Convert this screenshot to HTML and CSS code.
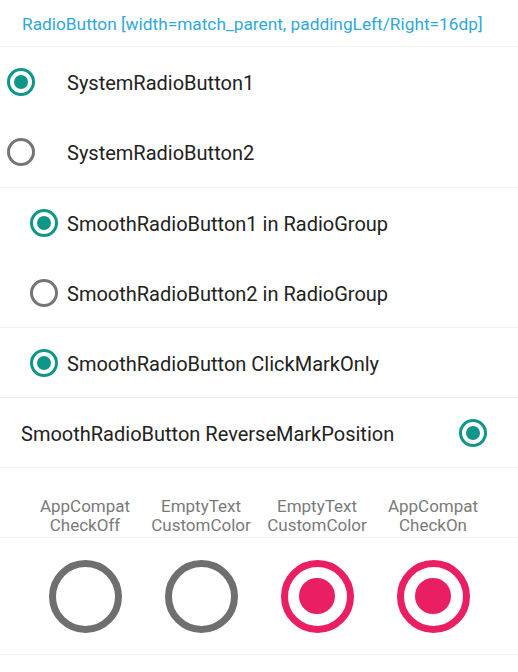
FILE: index.html
```html
<!DOCTYPE html>
<html>
<head>
<meta charset="utf-8">
<link rel="stylesheet" href="styles.css">
</head>
<body>
<div class="screen">
  <div class="header">RadioButton [width=match_parent, paddingLeft/Right=16dp]</div>

  <div class="section">
    <div class="row sys">
      <span class="radio on sys-mark"></span>
      <span class="label sys-label">SystemRadioButton1</span>
    </div>
    <div class="row sys">
      <span class="radio off sys-mark"></span>
      <span class="label sys-label">SystemRadioButton2</span>
    </div>
  </div>

  <div class="section">
    <div class="row smooth">
      <span class="radio on"></span>
      <span class="label">SmoothRadioButton1 in RadioGroup</span>
    </div>
    <div class="row smooth short">
      <span class="radio off"></span>
      <span class="label">SmoothRadioButton2 in RadioGroup</span>
    </div>
  </div>

  <div class="section">
    <div class="row smooth short">
      <span class="radio on"></span>
      <span class="label">SmoothRadioButton ClickMarkOnly</span>
    </div>
  </div>

  <div class="section">
    <div class="row reverse short">
      <span class="label">SmoothRadioButton ReverseMarkPosition</span>
      <span class="radio on"></span>
    </div>
  </div>

  <div class="section labels">
    <div class="cap">AppCompat<br>CheckOff</div>
    <div class="cap">EmptyText<br>CustomColor</div>
    <div class="cap">EmptyText<br>CustomColor</div>
    <div class="cap">AppCompat<br>CheckOn</div>
  </div>

  <div class="section bigs">
    <div class="cell"><span class="big off"></span></div>
    <div class="cell"><span class="big off"></span></div>
    <div class="cell"><span class="big on"></span></div>
    <div class="cell"><span class="big on"></span></div>
  </div>
</div>
</body>
</html>
```

FILE: styles.css
```css
html, body {
  margin: 0;
  padding: 0;
  background: #ffffff;
}

.screen {
  width: 518px;
  font-family: Roboto, "Noto Sans", sans-serif;
  color: #222222;
}

.header {
  height: 47px;
  box-sizing: border-box;
  padding-left: 22px;
  padding-top: 1px;
  display: flex;
  align-items: center;
  font-size: 17.3px;
  color: #2fa8dc;
  border-bottom: 1px solid #efefef;
}

.section {
  border-bottom: 1px solid #efefef;
}

.row {
  height: 70px;
  display: flex;
  align-items: center;
}

.row.short {
  height: 69px;
}

.row.sys {
  padding-left: 7px;
}

.row.smooth {
  padding-left: 30px;
}

.row.reverse {
  padding-left: 21px;
  padding-right: 31px;
  justify-content: space-between;
}

.label {
  font-size: 20px;
  color: #222222;
  padding-left: 9px;
  padding-top: 2px;
}

.reverse .label {
  padding-left: 0;
}

.sys-label {
  padding-left: 32px;
}

.radio {
  width: 28px;
  height: 28px;
  box-sizing: border-box;
  border-radius: 50%;
  border: 3px solid #757575;
  flex: none;
  position: relative;
}

.radio.on {
  border-color: #0f9688;
}

.radio.on::after {
  content: "";
  position: absolute;
  left: 4px;
  top: 4px;
  width: 14px;
  height: 14px;
  border-radius: 50%;
  background: #0f9688;
}

.labels {
  height: 70px;
  box-sizing: border-box;
  display: grid;
  grid-template-columns: repeat(4, 116px);
  padding-left: 27px;
  padding-bottom: 2px;
  align-items: end;
}

.cap {
  text-align: center;
  font-size: 17px;
  line-height: 19px;
  color: #7a7a7a;
}

.bigs {
  height: 116px;
  display: grid;
  grid-template-columns: repeat(4, 116px);
  padding-left: 27px;
  align-items: center;
}

.cell {
  display: flex;
  justify-content: center;
}

.big {
  width: 73px;
  height: 73px;
  box-sizing: border-box;
  border-radius: 50%;
  border: 7px solid #6f6f6f;
  position: relative;
}

.big.on {
  border-color: #e91e63;
}

.big.on::after {
  content: "";
  position: absolute;
  left: 11.5px;
  top: 11.5px;
  width: 36px;
  height: 36px;
  border-radius: 50%;
  background: #e91e63;
}
```
